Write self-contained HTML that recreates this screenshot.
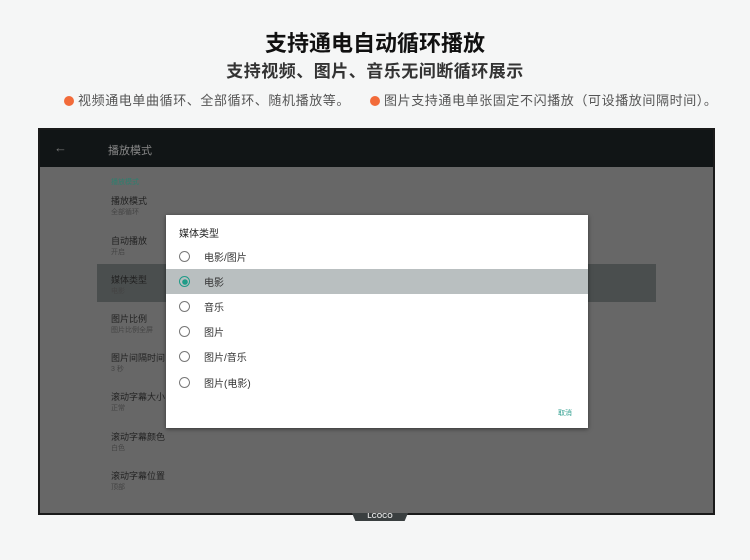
<!DOCTYPE html>
<html><head><meta charset="utf-8"><style>
body{margin:0;width:750px;height:560px;background:#f5f6f6;font-family:"Liberation Sans","Noto Sans CJK SC",sans-serif;position:relative;overflow:hidden}
.a{position:absolute;white-space:nowrap}
.t1{left:0;width:750px;text-align:center;top:26px;font-size:22px;font-weight:bold;color:#111}
.t2{left:0;width:750px;text-align:center;top:57px;font-size:17px;font-weight:bold;color:#333;letter-spacing:0.5px}
.b{top:90px;font-size:13px;color:#555;letter-spacing:0.6px}
.dot{display:inline-block;width:10px;height:10px;border-radius:50%;background:#f26b3a;margin-right:4px;vertical-align:-1px}
#tv{left:38px;top:128px;width:673px;height:383px;border:2px solid #1a1a1a;background:#676767}
#hd{left:0;top:0;width:673px;height:37px;background:#111516}
.it{font-size:9px;color:#222;left:71px}
.sub{font-size:7px;color:#444;left:71px}
#dlg{left:166px;top:215px;width:422px;height:213px;background:#fff;box-shadow:0 1px 4px rgba(0,0,0,.5)}
.r{left:13px;width:9px;height:9px;border:1.3px solid #777;border-radius:50%}
.o{left:38px;font-size:10px;color:#333}
</style></head><body>
<div class="a t1">支持通电自动循环播放</div>
<div class="a t2">支持视频、图片、音乐无间断循环展示</div>
<div class="a b" style="left:64px"><span class="dot"></span>视频通电单曲循环、全部循环、随机播放等。</div>
<div class="a b" style="left:370px"><span class="dot"></span>图片支持通电单张固定不闪播放（可设播放间隔时间）。</div>
<div class="a" id="tv">
 <div class="a" id="hd"><span class="a" style="left:14px;top:10px;color:#777;font-size:13px">←</span><span class="a" style="left:68px;top:12px;color:#888;font-size:11px">播放模式</span></div>
 <div class="a" style="left:57px;top:134px;width:559px;height:38px;background:#4a4e4e"></div>
 <div class="a" style="left:71px;top:47px;font-size:7px;color:#2f7f6f">播放模式</div>
 <div class="a it" style="top:64px">播放模式</div><div class="a sub" style="top:77px">全部循环</div>
 <div class="a it" style="top:104px">自动播放</div><div class="a sub" style="top:117px">开启</div>
 <div class="a it" style="top:143px">媒体类型</div><div class="a sub" style="top:156px">电影</div>
 <div class="a it" style="top:182px">图片比例</div><div class="a sub" style="top:195px">图片比例全屏</div>
 <div class="a it" style="top:221px">图片间隔时间</div><div class="a sub" style="top:234px">3 秒</div>
 <div class="a it" style="top:260px">滚动字幕大小</div><div class="a sub" style="top:273px">正常</div>
 <div class="a it" style="top:300px">滚动字幕颜色</div><div class="a sub" style="top:313px">白色</div>
 <div class="a it" style="top:339px">滚动字幕位置</div><div class="a sub" style="top:352px">顶部</div>
</div>
<div class="a" style="left:352px;top:513px;width:56px;height:8px;background:#3a3f40;clip-path:polygon(0 0,100% 0,94% 100%,6% 100%)"></div>
<div class="a" style="left:352px;top:512px;width:56px;text-align:center;font-size:7px;color:#ddd;font-weight:bold;line-height:9px">LCOCO</div>
<div class="a" id="dlg">
 <div class="a" style="left:13px;top:10px;font-size:10px;color:#222">媒体类型</div>
 <div class="a" style="left:0;top:54px;width:422px;height:25px;background:#b9bfc0"></div>
 <div class="a r" style="top:36px"></div><div class="a o" style="top:34px">电影/图片</div>
 <div class="a r" style="top:61px;border-color:#1f9c88"></div><div class="a" style="left:17px;top:65px;width:4px;height:4px;border-radius:50%;background:#1f9c88;box-shadow:0 0 0 0.8px #1f9c88"></div><div class="a o" style="top:59px">电影</div>
 <div class="a r" style="top:86px"></div><div class="a o" style="top:84px">音乐</div>
 <div class="a r" style="top:111px"></div><div class="a o" style="top:109px">图片</div>
 <div class="a r" style="top:136px"></div><div class="a o" style="top:134px">图片/音乐</div>
 <div class="a r" style="top:162px"></div><div class="a o" style="top:160px">图片(电影)</div>
 <div class="a" style="left:392px;top:193px;font-size:7px;color:#2f9f8f">取消</div>
</div>
</body></html>
